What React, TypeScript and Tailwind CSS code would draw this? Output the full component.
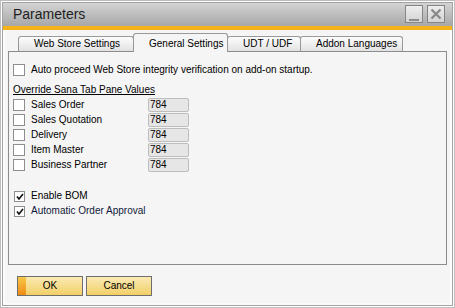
import React from "react";

const font = { fontFamily: '"Liberation Sans", Arial, sans-serif' };

function Box({ checked, className = "" }: { checked?: boolean; className?: string }) {
  return (
    <div
      className={`relative w-[12px] h-[12px] shrink-0 border border-[#8e8e8e] bg-white ${className}`}
    >
      {checked && (
        <svg className="absolute left-0 top-0" width="10" height="10" viewBox="0 0 10 10">
          <path d="M2 4.5 L4 7 L8 2" fill="none" stroke="#111" strokeWidth="1.6" />
        </svg>
      )}
    </div>
  );
}

function Row({ label }: { label: string }) {
  return (
    <div className="flex h-[14px] items-center">
      <Box />
      <div className="ml-[6px] w-[117px] text-[10px] leading-[12px] text-black">{label}</div>
      <div className="flex h-[14px] w-[41px] items-center rounded-[2px] border border-[#bdbdbd] bg-[#e6e6e6] pl-[1px] text-[10px] leading-[12px] text-black">
        784
      </div>
    </div>
  );
}

export default function App() {
  const tabBase =
    "relative flex items-start pl-[15px] border border-b-0 border-[#999999] rounded-t-[3px] text-[10px] leading-[12px] text-black whitespace-nowrap";
  const inactive = `${tabBase} h-[15px] pt-[1px] bg-gradient-to-b from-[#fdfdfd] to-[#e2e2e2]`;
  return (
    <div style={font} className="w-[455px] h-[308px] overflow-hidden border border-[#bdbdbd] bg-white p-px">
      <div className="flex h-full flex-col border border-[#a3a3a3]">
        {/* Title bar */}
        <div className="flex h-[23px] shrink-0 items-start bg-gradient-to-b from-[#d4d4d4] to-[#a7a7a7] pl-[10px] pr-[7px]">
          <div className="mt-[3px] text-[14px] leading-[16px] text-[#1e1e1e]">Parameters</div>
          <div className="ml-auto mt-[2px] flex gap-[4px]">
            <div className="relative h-[18px] w-[18px] border border-[#858585] bg-gradient-to-b from-[#eeeeee] to-[#d3d3d3]">
              <div className="absolute left-[3px] top-[13px] h-[2px] w-[10px] bg-[#8c8c8c]" />
            </div>
            <div className="relative flex h-[18px] w-[18px] items-center justify-center border border-[#858585] bg-gradient-to-b from-[#eeeeee] to-[#d3d3d3]">
              <svg width="12" height="12" viewBox="0 0 12 12">
                <path d="M1.5 1.5 L10.5 10.5 M10.5 1.5 L1.5 10.5" stroke="#8a8a8a" strokeWidth="2.4" />
              </svg>
            </div>
          </div>
        </div>
        <div className="h-[4px] shrink-0 bg-[#f5b31a]" />
        {/* Body */}
        <div className="flex flex-1 flex-col border-x-2 border-b-2 border-[#fbfbfb] bg-[#f5f5f5]">
          {/* Tabs */}
          <div className="ml-[13px] flex h-[21px] items-end">
            <div className={`${inactive} w-[116px]`}>Web Store Settings</div>
            <div className={`${tabBase} z-10 -mb-px -ml-px h-[19px] w-[95px] bg-[#f5f5f5] pt-[4px]`}>
              General Settings
            </div>
            <div className={`${inactive} -ml-px w-[74px]`}>UDT / UDF</div>
            <div className={`${inactive} -ml-px w-[103px]`}>Addon Languages</div>
          </div>
          {/* Panel */}
          <div className="ml-[3px] flex h-[214px] w-[439px] flex-col border border-[#8c8c8c] pl-[4px] pt-[11px]">
            <div className="flex h-[14px] items-center">
              <Box />
              <div className="ml-[6px] text-[10px] leading-[12px] text-black">
                Auto proceed Web Store integrity verification on add-on startup.
              </div>
            </div>
            <div className="mt-[6px] flex flex-col gap-[1px]">
              <div className="flex h-[14px] items-center">
                <span className="text-[10px] leading-[12px] text-black underline underline-offset-[1px]">
                  Override Sana Tab Pane Values
                </span>
              </div>
              <Row label="Sales Order" />
              <Row label="Sales Quotation" />
              <Row label="Delivery" />
              <Row label="Item Master" />
              <Row label="Business Partner" />
            </div>
            <div className="mt-[17px] flex flex-col gap-[1px]">
              <div className="flex h-[14px] items-center">
                <Box checked className="ml-[1px] !h-[11px] !w-[11px]" />
                <div className="ml-[6px] text-[10px] leading-[12px] text-black">Enable BOM</div>
              </div>
              <div className="flex h-[14px] items-center">
                <Box checked className="ml-[1px] !h-[11px] !w-[11px]" />
                <div className="ml-[6px] text-[10px] leading-[12px] text-[#101a3a]">Automatic Order Approval</div>
              </div>
            </div>
          </div>
          {/* Buttons */}
          <div className="ml-[12px] mt-[11px] flex gap-[3px]">
            <div className="relative flex h-[20px] w-[66px] items-center justify-center border border-[#6e6e6e] bg-gradient-to-b from-[#faeab2] to-[#f2cf66] text-[10px] leading-[12px] text-black">
              <div className="absolute left-0 top-0 h-full w-[8px] bg-gradient-to-b from-[#f8c846] to-[#ee8a12]" />
              <span className="relative">OK</span>
            </div>
            <div className="flex h-[20px] w-[66px] items-center justify-center border border-[#6e6e6e] bg-gradient-to-b from-[#faeab2] to-[#f2cf66] text-[10px] leading-[12px] text-black">
              Cancel
            </div>
          </div>
        </div>
      </div>
    </div>
  );
}
